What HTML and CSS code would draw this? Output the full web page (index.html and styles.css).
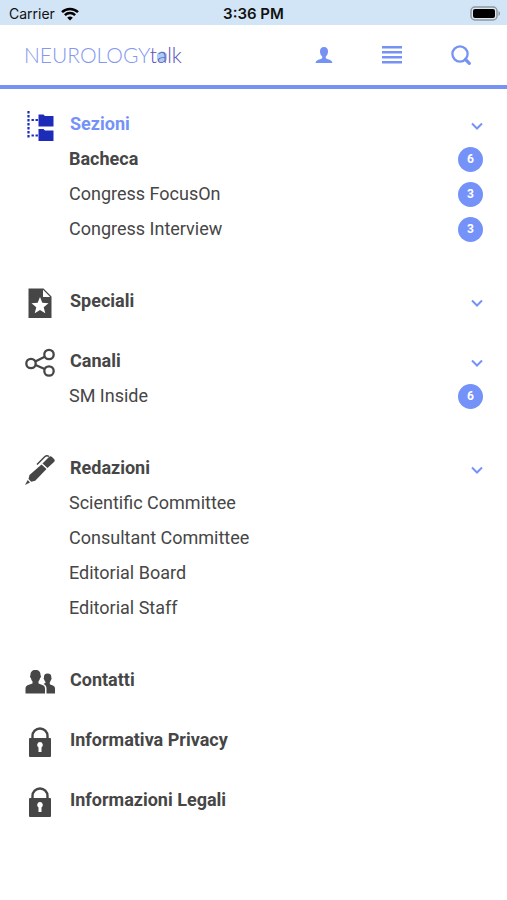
FILE: index.html
```
<!DOCTYPE html>
<html lang="it">
<head>
  <meta charset="UTF-8">
  <meta name="viewport" content="width=device-width, initial-scale=1">
  <title>Neurologytalk</title>
  <link rel="stylesheet" href="styles.css">
</head>
<body>
<div class="status-bar">
  <div class="status-left">
    <span>Carrier</span>
    <svg width="18" height="14" viewBox="0 0 18 14" fill="none" stroke="#000" stroke-width="2.5">
      <path d="M1 5.200a11.300 11.300 0 0 1 16 0M3.900 8.200a7.200 7.200 0 0 1 10.200 0"/>
      <path d="M9 13.600l-2.800-2.800a4 4 0 0 1 5.600 0z" fill="#000" stroke="none"/>
    </svg>
  </div>
  <div class="status-time">3:36 PM</div>
  <div class="status-right">
    <svg width="31" height="16" viewBox="0 0 31 16">
      <rect x="1" y="1" width="26" height="13" rx="4" fill="#dce8f2" stroke="#8d979f" stroke-width="1.5"/>
      <rect x="3" y="3" width="22" height="9" rx="2" fill="#000"/>
      <path d="M28.500 5c2 .8 2 4.200 0 5z" fill="#8d979f"/>
    </svg>
  </div>
</div>

<header class="header">
  <a href="#" class="logo">NEUROLOGY<span class="talk">t<span class="dot">a</span>lk</span></a>
  <nav class="tools">
    <button type="button" aria-label="Profilo">
      <svg width="18" height="18" viewBox="0 0 18 18" fill="#7592f4">
        <path d="M9 1c2.600 0 4 1.700 4 4.200 0 2.300-.9 4.300-2.200 5.200v1.600c0 1.200 6.200 1.300 6.700 5H.5c.5-3.700 6.700-3.800 6.700-5v-1.600C5.900 9.500 5 7.500 5 5.200 5 2.700 6.400 1 9 1z"/>
      </svg>
    </button>
    <button type="button" aria-label="Menu">
      <svg width="20" height="18" viewBox="0 0 20 18" fill="#7592f4">
        <path d="M0 0h20v2.500H0zM0 5h20v2.500H0zM0 10h20v2.500H0zM0 15h20v2.500H0z"/>
      </svg>
    </button>
    <button type="button" aria-label="Cerca">
      <svg width="20" height="20" viewBox="0 0 20 20" fill="none" stroke="#7592f4">
        <circle cx="9" cy="9" r="7.600" stroke-width="2.300"/>
        <path d="M14.500 14.500l3.800 3.800" stroke-width="3.200" stroke-linecap="round"/>
      </svg>
    </button>
  </nav>
</header>

<main class="menu">
  <details class="section" open>
    <summary class="head active">
      <svg class="icon" viewBox="0 0 30 30" fill="#1c2cb8">
        <path d="M13.500 3.500h5l1.500 1.500h8.500v10.500h-15zM13.500 18h5l1.500 1.500h8.500v10.500h-15z"/>
        <path d="M3.500 0v27M6.500 9h7M6.500 24.500h7" fill="none" stroke="#1c2cb8" stroke-width="2.200" stroke-dasharray="2.400 1.600"/>
      </svg>
      <span class="title">Sezioni</span>
      <svg class="arrow" viewBox="0 0 12 8"><path d="M1 1.500l5 5 5-5"/></svg>
    </summary>
    <ul class="items">
      <li><a href="#" class="current">Bacheca</a><span class="badge">6</span></li>
      <li><a href="#">Congress FocusOn</a><span class="badge">3</span></li>
      <li><a href="#">Congress Interview</a><span class="badge">3</span></li>
    </ul>
  </details>

  <details class="section">
    <summary class="head">
      <svg class="icon" viewBox="0 0 30 30" fill="#464646">
        <path fill-rule="evenodd" d="M3.500.5h15l8 8V30h-23zM15 9l-2.300 5.800-6.200.4 4.800 4-1.600 6 5.300-3.300 5.300 3.300-1.600-6 4.800-4-6.200-.4zM18 1.800v7.200h7.200z"/>
        <path d="M19.300 4.500v3.300h3.300z" fill="#fff"/>
      </svg>
      <span class="title">Speciali</span>
      <svg class="arrow" viewBox="0 0 12 8"><path d="M1 1.500l5 5 5-5"/></svg>
    </summary>
  </details>

  <details class="section" open>
    <summary class="head">
      <svg class="icon" viewBox="0 0 30 30" fill="none" stroke="#464646" stroke-width="2.300">
        <circle cx="6" cy="15.500" r="4.700"/>
        <circle cx="24" cy="6.500" r="4.700"/>
        <circle cx="24" cy="23" r="4.700"/>
        <path d="M10.300 13.500l9.400-4.800M10.500 17l9.200 4"/>
      </svg>
      <span class="title">Canali</span>
      <svg class="arrow" viewBox="0 0 12 8"><path d="M1 1.500l5 5 5-5"/></svg>
    </summary>
    <ul class="items">
      <li><a href="#">SM Inside</a><span class="badge">6</span></li>
    </ul>
  </details>

  <details class="section" open>
    <summary class="head">
      <svg class="icon" viewBox="0 0 30 30" fill="#464646">
        <path d="M16.500 9.500L4.500 20l-1 4 2.700 2.700 4-1L21.500 14z"/>
        <path d="M17.500 8.500L24 2c1-1 2-1 3 0l2 2c1 1 1 2 0 3l-6.500 6z"/>
        <path d="M2.700 25L0 30l5-2.600z"/>
        <path d="M24 1.500c-1.800-1.200-3-.9-4.300.3L12 9.500" fill="none" stroke="#464646" stroke-width="1.500"/>
      </svg>
      <span class="title">Redazioni</span>
      <svg class="arrow" viewBox="0 0 12 8"><path d="M1 1.500l5 5 5-5"/></svg>
    </summary>
    <ul class="items">
      <li><a href="#">Scientific Committee</a></li>
      <li><a href="#">Consultant Committee</a></li>
      <li><a href="#">Editorial Board</a></li>
      <li><a href="#">Editorial Staff</a></li>
    </ul>
  </details>

  <div class="section">
    <a href="#" class="head">
      <svg class="icon" viewBox="0 0 30 30" fill="#464646">
        <path d="M10.500 3c3.600 0 5.200 2 5 5.200.9.300.5 2.500-.5 3-.3 1.500-.8 2.300-1.500 3v2.300l4.500 1.800c1.700.7 2 2 2 3.700v4.500H.5V22c0-1.700.4-3 2-3.700l5-1.800v-2.300c-.8-.7-1.300-1.500-1.500-3-1-.5-1.400-2.700-.5-3C5.300 5 7 3 10.500 3z"/>
        <path d="M22.500 6.500c2.800 0 4 1.600 3.800 4 .6.300.3 2-.4 2.500-.2 1-.6 1.600-1.100 2.200v2l3.500 1.500c1.200.5 1.700 1.500 1.700 3v4.800h-8.500v-5c0-2.500-1-3.800-3-4.600l2-1.200v-.8c-.5-.5-.9-1-1.100-2-.8-.5-1-2.100-.4-2.400-.2-2.400 1-4 3.500-4z"/>
      </svg>
      <span class="title">Contatti</span>
    </a>
  </div>

  <div class="section">
    <a href="#" class="head">
      <svg class="icon" viewBox="0 0 30 30" fill="#464646">
        <path d="M7.500 12V9a7.500 7.500 0 0 1 15 0v3" fill="none" stroke="#464646" stroke-width="2.400"/>
        <rect x="4" y="11" width="22" height="19" rx="1"/>
        <path d="M15 15a3 3 0 0 1 1.500 5.500V25h-3v-4.500A3 3 0 0 1 15 15z" fill="#fff"/>
      </svg>
      <span class="title">Informativa Privacy</span>
    </a>
  </div>

  <div class="section">
    <a href="#" class="head">
      <svg class="icon" viewBox="0 0 30 30" fill="#464646">
        <path d="M7.500 12V9a7.500 7.500 0 0 1 15 0v3" fill="none" stroke="#464646" stroke-width="2.400"/>
        <rect x="4" y="11" width="22" height="19" rx="1"/>
        <path d="M15 15a3 3 0 0 1 1.500 5.500V25h-3v-4.500A3 3 0 0 1 15 15z" fill="#fff"/>
      </svg>
      <span class="title">Informazioni Legali</span>
    </a>
  </div>
</main>
</body>
</html>
```
FILE: styles.css
```
* {
  box-sizing: border-box;
}
body {
  margin: 0;
  background: #fff;
  color: #464646;
  font-family: Roboto, sans-serif;
  font-size: 18px;
}
a {
  color: inherit;
  text-decoration: none;
}

/* status bar */
.status-bar {
  display: grid;
  grid-template-columns: 1fr auto 1fr;
  align-items: center;
  height: 25px;
  padding: 2px 6px 0 9px;
  background: #d2e5f6;
  color: #111;
  font-family: Inter, sans-serif;
  font-size: 14px;
}
.status-left {
  display: flex;
  align-items: center;
  gap: 6px;
}
.status-time {
  padding-right: 3px;
  font-size: 15px;
  font-weight: 600;
}
.status-right {
  display: flex;
  justify-content: flex-end;
}

/* header */
.header {
  display: flex;
  align-items: center;
  justify-content: space-between;
  height: 64px;
  padding: 0 36px 0 24px;
  border-bottom: 4px solid #7592f4;
}
.logo {
  padding-bottom: 2px;
  color: #8398ef;
  font-family: Lato, sans-serif;
  font-size: 21px;
  font-weight: 300;
}
.talk {
  color: #5b50b8;
}
.dot {
  background: radial-gradient(circle at 50% 60%, #a9cdf3 5px, transparent 6px);
}
.tools {
  display: flex;
  align-items: center;
  gap: 49px;
}
.tools button {
  display: flex;
  padding: 0;
  border: none;
  background: none;
  cursor: pointer;
}

/* menu */
.menu {
  padding: 20px 24px 20px 25px;
}
.section {
  margin-bottom: 27px;
}
.head {
  display: flex;
  align-items: center;
  height: 33px;
  font-weight: bold;
  list-style: none;
  cursor: pointer;
}
.active {
  color: #7592f9;
}
.icon {
  width: 30px;
  height: 30px;
  margin-right: 15px;
}
.title {
  flex: 1;
  padding-bottom: 4px;
}
.arrow {
  width: 12px;
  height: 8px;
  fill: none;
  stroke: #7592f9;
  stroke-width: 2;
}
.items {
  margin: 0;
  padding: 0 0 12px 44px;
  list-style: none;
}
.items li {
  display: flex;
  align-items: center;
  justify-content: space-between;
  height: 35px;
}
.items a {
  padding-bottom: 2px;
}
.current {
  font-weight: bold;
}
.badge {
  width: 25px;
  height: 25px;
  border-radius: 50%;
  background: #7592f9;
  color: #fff;
  font-size: 12px;
  font-weight: bold;
  line-height: 25px;
  text-align: center;
}
```
